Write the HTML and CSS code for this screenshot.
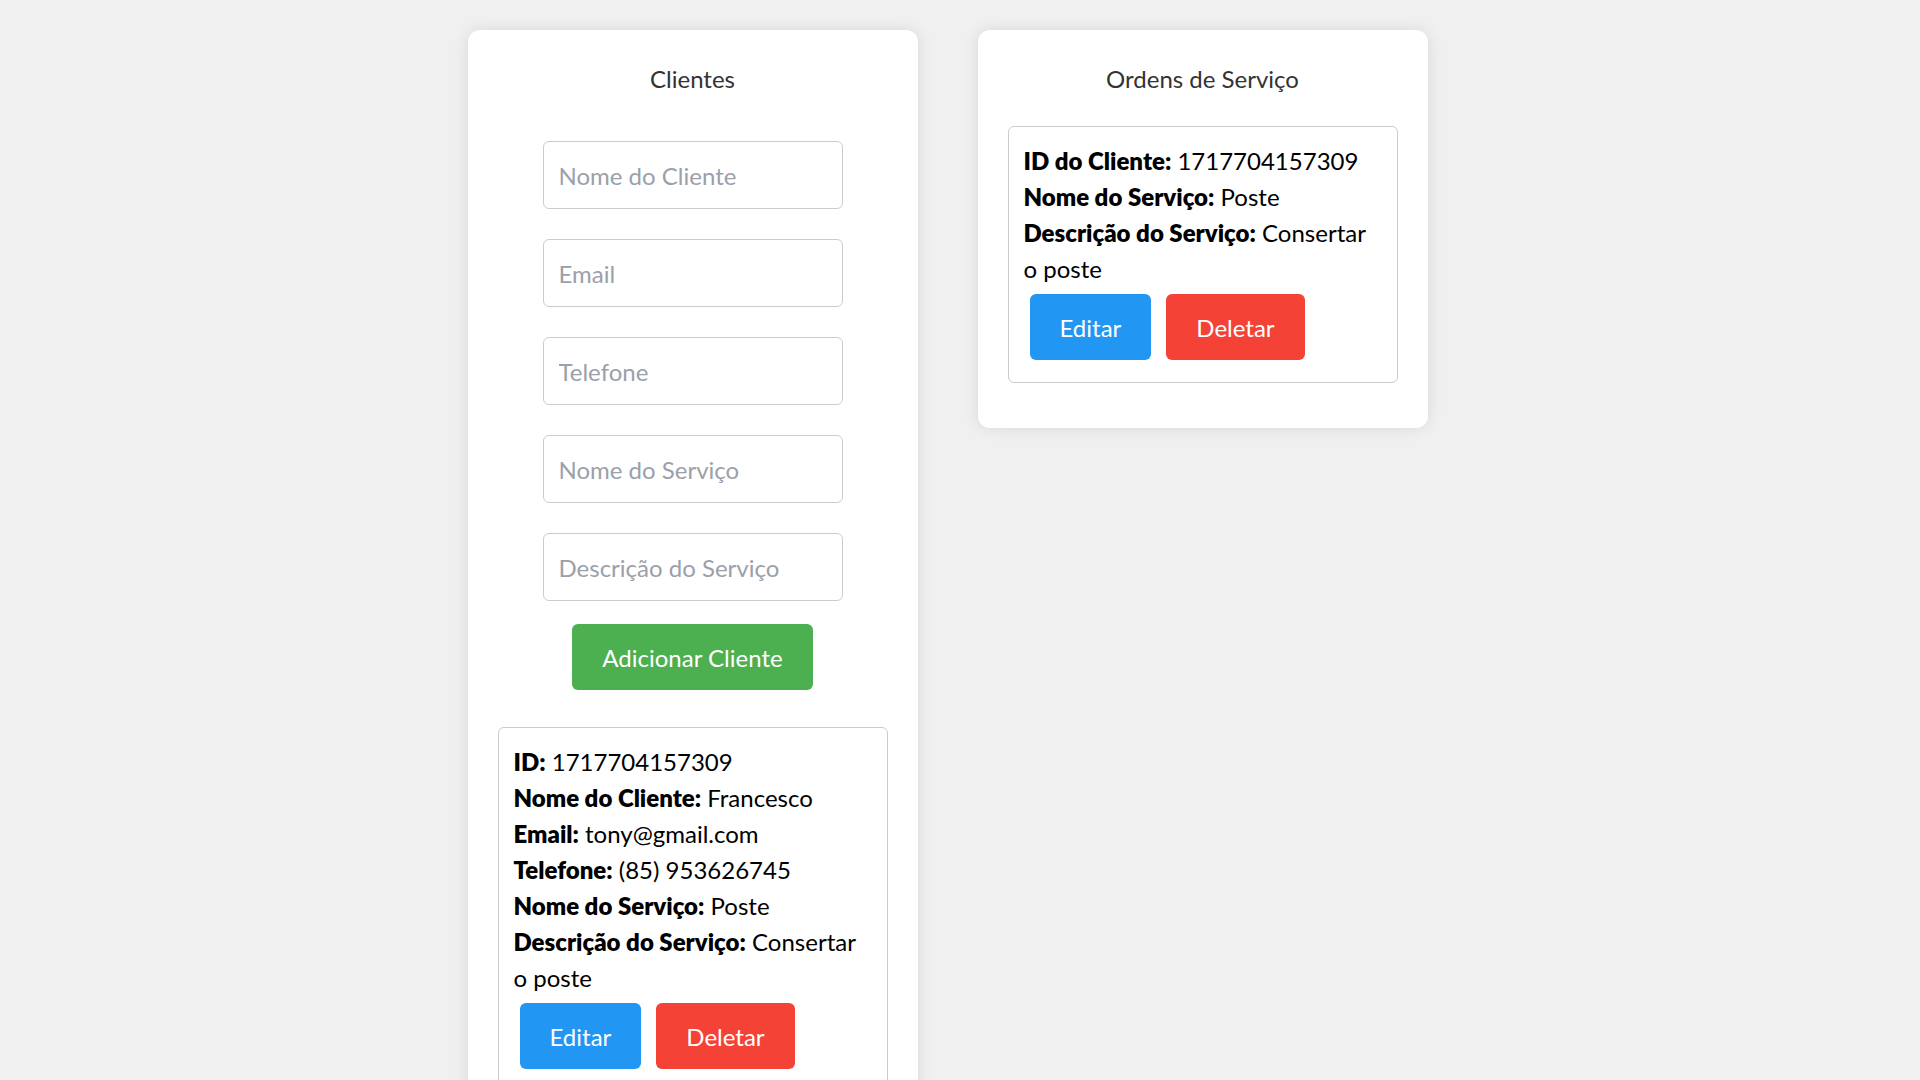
FILE: index.html
```html
<!DOCTYPE html>
<html lang="pt-BR">
<head>
    <meta charset="UTF-8">
    <meta name="viewport" content="width=device-width, initial-scale=1.0">
    <title>Clientes e Ordens de Serviço</title>
    <link rel="stylesheet" href="styles.css">
</head>
<body>
    <div class="container">
        <section class="card">
            <h2>Clientes</h2>

            <form class="client-form" id="client-form">
                <div class="fields">
                    <input type="text" id="nome" placeholder="Nome do Cliente">
                    <input type="email" id="email" placeholder="Email">
                    <input type="text" id="telefone" placeholder="Telefone">
                    <input type="text" id="servico" placeholder="Nome do Serviço">
                    <input type="text" id="descricao" placeholder="Descrição do Serviço">
                </div>
                <button type="submit" class="btn btn-add">Adicionar Cliente</button>
            </form>

            <div class="item-list" id="client-list">
                <div class="item">
                    <p><strong>ID:</strong> 1717704157309</p>
                    <p><strong>Nome do Cliente:</strong> Francesco</p>
                    <p><strong>Email:</strong> tony@gmail.com</p>
                    <p><strong>Telefone:</strong> (85) 953626745</p>
                    <p><strong>Nome do Serviço:</strong> Poste</p>
                    <p><strong>Descrição do Serviço:</strong> Consertar o poste</p>
                    <div class="actions">
                        <button class="btn btn-edit">Editar</button>
                        <button class="btn btn-delete">Deletar</button>
                    </div>
                </div>
            </div>
        </section>

        <section class="card">
            <h2>Ordens de Serviço</h2>

            <div class="item-list" id="order-list">
                <div class="item">
                    <p><strong>ID do Cliente:</strong> 1717704157309</p>
                    <p><strong>Nome do Serviço:</strong> Poste</p>
                    <p><strong>Descrição do Serviço:</strong> Consertar o poste</p>
                    <div class="actions">
                        <button class="btn btn-edit">Editar</button>
                        <button class="btn btn-delete">Deletar</button>
                    </div>
                </div>
            </div>
        </section>
    </div>
</body>
</html>
```

FILE: styles.css
```css
:root {
    --green: #4caf50;
    --blue: #2196f3;
    --red: #f44336;
    --border: #cccccc;
}

* {
    box-sizing: border-box;
}

body {
    margin: 0;
    background: #f0f0f0;
    font-family: Lato, "Liberation Sans", sans-serif;
    font-size: 24px;
    color: #000;
}

/* leaves room on the right like the page scrollbar does */
.container {
    display: flex;
    justify-content: center;
    align-items: flex-start;
    padding-right: 25px;
}

.card {
    width: 450px;
    margin: 30px;
    padding: 30px;
    background: #fff;
    border-radius: 12px;
    box-shadow: 0 0 15px rgba(0, 0, 0, 0.1);
}

h2 {
    margin: 3px 0 31px;
    font-size: 24px;
    font-weight: normal;
    line-height: 32px;
    text-align: center;
    color: #333;
}

.client-form {
    display: flex;
    flex-direction: column;
    align-items: center;
    padding-top: 15px;
}

.fields {
    display: flex;
    flex-direction: column;
    gap: 30px;
}

.fields input {
    width: 300px;
    height: 68px;
    padding: 0 15px;
    border: 1px solid var(--border);
    border-radius: 6px;
    font-family: inherit;
    font-size: 24px;
    color: #000;
}

.fields input::placeholder {
    color: #9ba0aa;
}

.btn {
    height: 66px;
    padding: 0 30px;
    border: none;
    border-radius: 6px;
    color: #fff;
    font-family: inherit;
    font-size: 24px;
    cursor: pointer;
}

.btn-add {
    margin-top: 23px;
    background: var(--green);
}

.btn-edit {
    background: var(--blue);
}

.btn-delete {
    background: var(--red);
}

.item-list {
    margin-bottom: 15px;
}

.client-form + .item-list {
    margin-top: 37px;
}

.item {
    padding: 16px 15px 15px;
    border: 1px solid var(--border);
    border-radius: 6px;
    line-height: 36px;
}

.item p {
    margin: 0;
}

.item strong {
    font-weight: 800;
}

.actions {
    display: flex;
    gap: 15px;
    margin: 7px 0 7px 6px;
}
```
